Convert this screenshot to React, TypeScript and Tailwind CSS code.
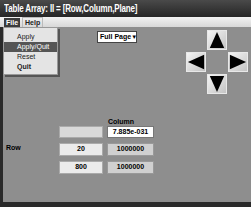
import React from "react";

const Tri = ({ dir }: { dir: "up" | "down" | "left" | "right" }) => {
  const pts: Record<string, string> = {
    up: "10,1 18,19 2,19",
    down: "2,1 18,1 10,19",
    left: "1,10 19,2 19,18",
    right: "1,2 19,10 1,18",
  };
  return (
    <div className="w-[20px] h-[20px] bg-gradient-to-br from-[#f4f4f4] to-[#c4c4c4] border border-[#e8e8e8] flex items-center justify-center">
      <svg width="18" height="18" viewBox="0 0 20 20">
        <polygon points={pts[dir]} fill="#000" />
      </svg>
    </div>
  );
};

export default function App() {
  const font = { fontFamily: '"Liberation Sans", Arial, sans-serif' };
  return (
    <div
      className="w-[251px] h-[207px] flex flex-col bg-[#8e8e8e] overflow-hidden relative"
      style={font}
    >
      {/* title bar */}
      <div className="h-[17px] bg-gradient-to-b from-[#4a4a4a] to-[#262626] text-white text-[10px] font-bold flex items-center pl-[4px] whitespace-nowrap">
        <span className="inline-block origin-left scale-x-[0.8] tracking-[-0.2px]">
          Table Array: II = [Row,Column,Plane]
        </span>
      </div>
      {/* menu bar */}
      <div className="h-[10px] bg-gradient-to-b from-[#f2f2f2] to-[#d8d8d8] flex items-center text-[7px] font-bold pl-[4px] gap-[2px]">
        <span className="bg-[#3c3c3c] text-white px-[2px] leading-[9px]">File</span>
        <span className="text-[#222] px-[2px] leading-[9px] border border-[#bbb]">Help</span>
      </div>
      {/* body */}
      <div className="flex-1 flex border-l-[3px] border-b-[5px] border-[#2a2a2a] relative">
        <div className="flex-1 flex flex-col">
          <div className="mt-[4px] ml-[94px] w-[40px] h-[12px] bg-white border border-[#444] flex items-center justify-between px-[2px] text-[7px] font-bold whitespace-nowrap">
            <span>Full Page</span>
            <span className="text-[6px]">▼</span>
          </div>
          <div className="mt-[74px] ml-[3px] grid grid-cols-[49px_44px_47px] gap-x-[4px] text-[7px] font-bold">
            <div />
            <div />
            <div className="h-[9px] leading-[9px] text-black pl-[1px]">Column</div>
            <div />
            <div className="h-[12px] bg-[#d9d9d9] border border-[#aaa]" />
            <div className="h-[12px] bg-white border border-[#777] flex items-center justify-center text-black">
              7.885e-031
            </div>
            <div className="mt-[5px] h-[13px] text-black leading-[10px]">Row</div>
            <div className="mt-[5px] h-[13px] bg-[#ebebeb] border border-[#aaa] flex items-center justify-center text-black">
              20
            </div>
            <div className="mt-[5px] h-[13px] bg-[#d0d0d0] border border-[#999] flex items-center justify-center text-black">
              1000000
            </div>
            <div />
            <div className="mt-[5px] h-[13px] bg-[#ebebeb] border border-[#aaa] flex items-center justify-center text-black">
              800
            </div>
            <div className="mt-[5px] h-[13px] bg-[#d0d0d0] border border-[#999] flex items-center justify-center text-black">
              1000000
            </div>
          </div>
        </div>
        <div className="mt-[3px] mr-[3px] grid grid-cols-[20px_20px_20px] grid-rows-[20px_20px_20px] gap-x-[1px] gap-y-[2px] self-start">
          <div />
          <Tri dir="up" />
          <div />
          <Tri dir="left" />
          <div />
          <Tri dir="right" />
          <div />
          <Tri dir="down" />
          <div />
        </div>
        {/* dropdown menu */}
        <div className="absolute left-0 top-0 w-[55px] bg-[#e4e4e4] border border-[#999] shadow-[2px_2px_0_#555] flex flex-col pt-[4px] pb-[2px] text-[7px]">
          <div className="h-[10px] leading-[10px] pl-[13px] text-[#222]">Apply</div>
          <div className="h-[10px] leading-[10px] pl-[13px] bg-[#555] text-white">Apply/Quit</div>
          <div className="h-[10px] leading-[10px] pl-[13px] text-[#222]">Reset</div>
          <div className="h-[10px] leading-[10px] pl-[13px] text-[#222] font-bold">Quit</div>
        </div>
      </div>
    </div>
  );
}
